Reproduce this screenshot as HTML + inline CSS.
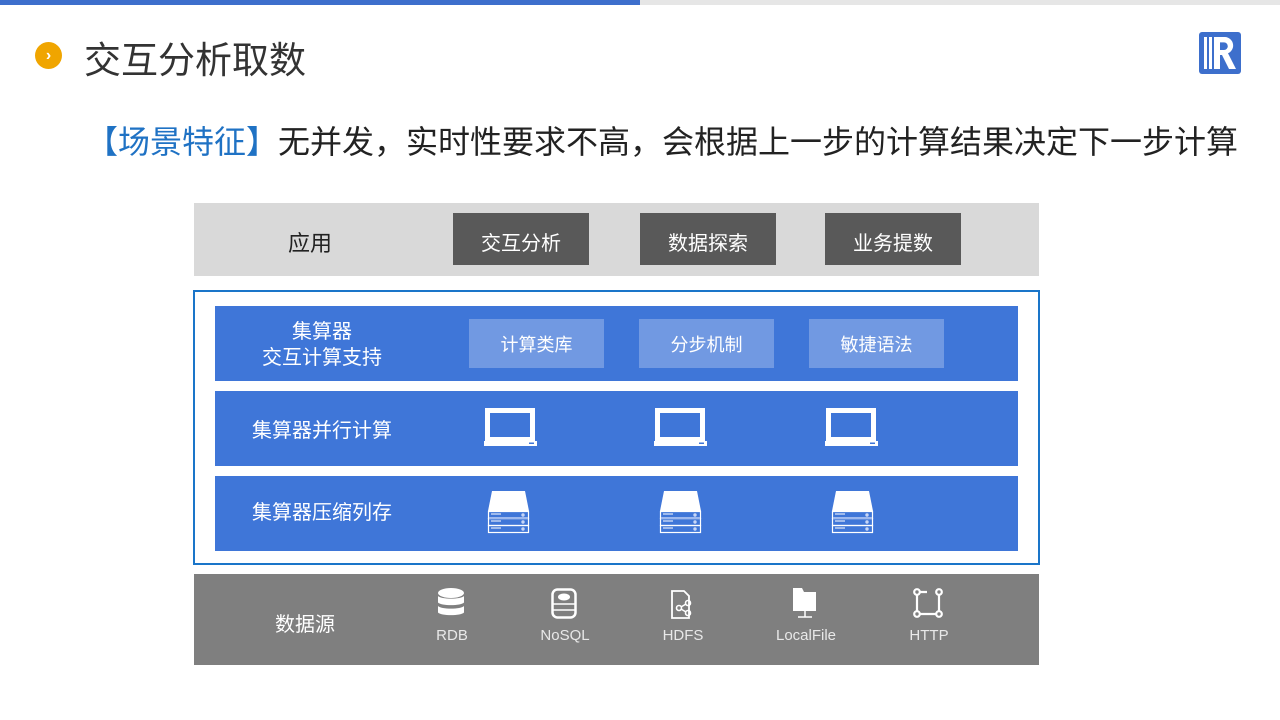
<!DOCTYPE html>
<html><head><meta charset="utf-8"><style>
*{margin:0;padding:0;box-sizing:border-box}
body{width:1280px;height:720px;background:#fff;position:relative;overflow:hidden;font-family:"Liberation Sans","Noto Sans CJK SC",sans-serif}
.a{position:absolute}
.c{display:flex;align-items:center;justify-content:center;text-align:center}
.btn{background:#595959;color:#fff;font-size:20px;top:213px;height:52px;width:136px;padding-top:4px}
.row{left:215px;width:803px;height:75px;background:#3f76d8}
.lb{color:#fff;font-size:20px;width:214px;left:215px;line-height:26px;text-align:center}
.lbtn{background:#7199e2;color:#fff;font-size:18px;top:319px;height:49px;width:135px}
.ds{color:#e8e8e8;font-size:15px;width:100px;top:627px}
</style></head><body>
<div class="a" style="left:0;top:0;width:640px;height:5px;background:#3d6fcc"></div>
<div class="a" style="left:640px;top:0;width:640px;height:5px;background:#e6e6e6"></div>
<div class="a c" style="left:35px;top:42px;width:27px;height:27px;border-radius:50%;background:#f0a500;color:#fff;font-weight:bold;font-size:16px">›</div>
<div class="a" style="left:84px;top:30px;font-size:37px;color:#333">交互分析取数</div>
<svg class="a" style="left:1199px;top:32px" width="42" height="42" viewBox="0 0 42 42"><rect width="42" height="42" rx="3" fill="#3d6fcc"/><rect x="5" y="5" width="3" height="32" fill="#fff"/><rect x="10" y="5" width="3" height="32" fill="#fff"/><path d="M15 5h11a8.5 8.5 0 0 1 3 16.3L37 37h-7l-7-14h-2v-5h4a3.8 3.8 0 0 0 0-7.6h-4V37h-6z" fill="#fff"/></svg>
<div class="a" style="left:86px;top:117px;font-size:32px;color:#222;white-space:nowrap"><span style="color:#1f72c4">【场景特征】</span>无并发，实时性要求不高，会根据上一步的计算结果决定下一步计算</div>

<div class="a" style="left:194px;top:203px;width:845px;height:73px;background:#d9d9d9"></div>
<div class="a" style="left:288px;top:226px;font-size:22px;color:#222">应用</div>
<div class="a c btn" style="left:453px">交互分析</div>
<div class="a c btn" style="left:640px">数据探索</div>
<div class="a c btn" style="left:825px">业务提数</div>

<div class="a" style="left:193px;top:290px;width:847px;height:275px;border:2px solid #1a75c9"></div>
<div class="a row" style="top:306px"></div>
<div class="a row" style="top:391px"></div>
<div class="a row" style="top:476px"></div>
<div class="a lb" style="top:319px">集算器<br>交互计算支持</div>
<div class="a lb" style="top:418px">集算器并行计算</div>
<div class="a lb" style="top:500px">集算器压缩列存</div>
<div class="a c lbtn" style="left:469px">计算类库</div>
<div class="a c lbtn" style="left:639px">分步机制</div>
<div class="a c lbtn" style="left:809px">敏捷语法</div>

<svg class="a" style="left:0;top:0" width="1280" height="720">
<defs>
<g id="lp"><rect x="3.5" y="2.5" width="45" height="29" fill="none" stroke="#fff" stroke-width="5"/><rect x="0" y="33" width="53" height="5" fill="#fff"/><rect x="45" y="34.5" width="5" height="1.5" fill="#3f76d8"/></g>
<g id="sv"><path d="M4 0h33l4 20H0z" fill="#fff"/><g fill="none" stroke="#fff" stroke-width="1.2"><rect x="0.5" y="20.5" width="40" height="7"/><rect x="0.5" y="27.5" width="40" height="7"/><rect x="0.5" y="34.5" width="40" height="7"/></g><rect x="1" y="26" width="39" height="2" fill="#9db8ee"/><g stroke="#fff" stroke-width="1"><line x1="3" y1="23" x2="13" y2="23"/><line x1="3" y1="30" x2="13" y2="30"/><line x1="3" y1="37" x2="13" y2="37"/></g><g fill="#c8d6f5"><circle cx="35" cy="24" r="1.7"/><circle cx="35" cy="31" r="1.7"/><circle cx="35" cy="38" r="1.7"/></g></g>
</defs>
<use href="#lp" x="484" y="408"/><use href="#lp" x="654" y="408"/><use href="#lp" x="825" y="408"/>
<use href="#sv" x="488" y="491"/><use href="#sv" x="660" y="491"/><use href="#sv" x="832" y="491"/>
</svg>

<div class="a" style="left:194px;top:574px;width:845px;height:91px;background:#7f7f7f"></div>
<div class="a" style="left:275px;top:608px;font-size:20px;color:#fff">数据源</div>
<svg class="a" style="left:0;top:0" width="1280" height="720" fill="none" stroke="#fff">
<g fill="#fff" stroke="none"><ellipse cx="451" cy="593" rx="13" ry="5"/><path d="M438 596c3 3.5 23 3.5 26 0v6.5c-3 3.5-23 3.5-26 0z"/><path d="M438 606c3 3.5 23 3.5 26 0v6.5c-3 3.5-23 3.5-26 0z"/></g>
<rect x="552.5" y="589.5" width="23" height="28" rx="5" stroke-width="2.5"/><ellipse cx="564" cy="597" rx="6" ry="3.5" fill="#fff" stroke="none"/><line x1="553" y1="604" x2="575" y2="604" stroke-width="1.5"/><line x1="553" y1="610" x2="575" y2="610" stroke-width="1.5"/>
<path d="M672 591h12l5 5v22h-17z" stroke-width="1.8"/><circle cx="679" cy="608" r="2.5" stroke-width="1.6"/><circle cx="688" cy="603" r="2.5" stroke-width="1.6"/><circle cx="688" cy="613" r="2.5" stroke-width="1.6"/><path d="M681 607l5-3M681 609l5 3" stroke-width="1.4"/>
<path d="M793 588h9l2 4h12v19h-23z" fill="#fff" stroke="none"/><path d="M805 611v6M798 617h14" stroke-width="1.5"/>
<circle cx="917" cy="592" r="2.8" stroke-width="2.2"/><circle cx="939" cy="592" r="2.8" stroke-width="2.2"/><circle cx="917" cy="614" r="2.8" stroke-width="2.2"/><circle cx="939" cy="614" r="2.8" stroke-width="2.2"/><path d="M920 592h7M939 595v16M917 595v16M920 614h16" stroke-width="2.2"/>
</svg>
<div class="a c ds" style="left:402px">RDB</div>
<div class="a c ds" style="left:515px">NoSQL</div>
<div class="a c ds" style="left:633px">HDFS</div>
<div class="a c ds" style="left:756px">LocalFile</div>
<div class="a c ds" style="left:879px">HTTP</div>
</body></html>
